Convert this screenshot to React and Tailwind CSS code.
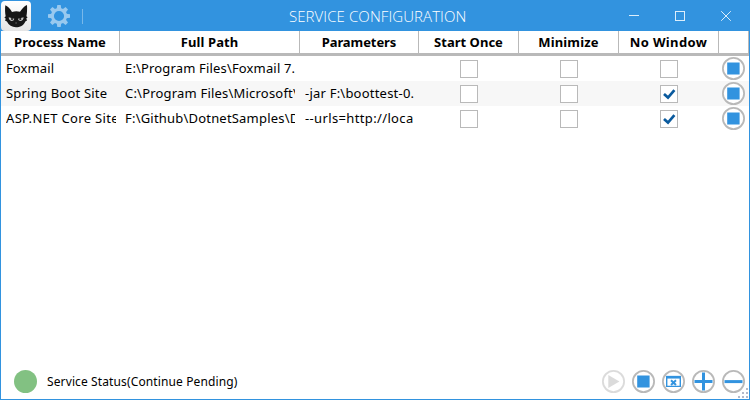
import React from 'react';

const FONT = "font-['Noto_Sans','Open_Sans',sans-serif]";

const columns = [
  { label: 'Process Name', width: 'w-[119px]', tracking: 'tracking-[0.03px]' },
  { label: 'Full Path', width: 'w-[180px]', tracking: 'tracking-[0.12px]' },
  { label: 'Parameters', width: 'w-[119px]', tracking: 'tracking-[-0.08px]' },
  { label: 'Start Once', width: 'w-[100px]', tracking: 'tracking-[0.02px]' },
  { label: 'Minimize', width: 'w-[100px]', tracking: 'tracking-[0.15px]' },
  { label: 'No Window', width: 'w-[100px]', tracking: 'tracking-[0.35px]' },
  { label: '', width: 'w-[30px]', tracking: '' },
];

const rows = [
  {
    name: 'Foxmail', nameTracking: 'tracking-[0.12px]',
    path: 'E:\\Program Files\\Foxmail 7.', pathTracking: 'tracking-[0.16px]',
    params: '', paramsTracking: '',
    checks: [false, false, false],
  },
  {
    name: 'Spring Boot Site', nameTracking: 'tracking-[0.2px]',
    path: 'C:\\Program Files\\Microsoft\\', pathTracking: 'tracking-[0.2px]',
    params: '-jar F:\\boottest-0.', paramsTracking: 'tracking-[0.22px]',
    checks: [false, false, true],
  },
  {
    name: 'ASP.NET Core Site', nameTracking: 'tracking-[0.33px]',
    path: 'F:\\Github\\DotnetSamples\\D', pathTracking: 'tracking-[0.2px]',
    params: '--urls=http://loca', paramsTracking: 'tracking-[0.36px]',
    checks: [false, false, true],
  },
];

function CatLogo() {
  return (
    <svg className="block h-[30px] w-[30px]" viewBox="0 0 30 30">
      <defs>
        <linearGradient id="tile" x1="0" y1="0" x2="0" y2="1">
          <stop offset="0" stopColor="#ffffff" />
          <stop offset="1" stopColor="#e4e4e4" />
        </linearGradient>
      </defs>
      <rect x="0" y="0" width="30" height="30" rx="4" fill="url(#tile)" />
      <path d="M4.3 4.2C6.6 5 9.4 8 11 11Q15 9.8 19 10.8C20.8 7.8 23.4 5 26 3.9C26.3 8 26 12.5 25.4 15.2L26.6 16.2L25.3 17.6L26 19.4L24.3 20.4C22.5 24.5 19 26.3 15 26.3S7.7 24.5 5.9 20.6L4 19.6L4.8 17.8L3.4 16.6L4.7 15.2C4 12 3.9 8 4.3 4.2Z" fill="#161616" />
      <path d="M7.7 16.2L13.3 17.7C13 19.3 11.9 20 10.5 19.9C8.8 19.7 7.8 18.3 7.7 16.2Z" fill="#c2c2c2" />
      <path d="M22.6 16.2L17 17.7C17.3 19.3 18.4 20 19.8 19.9C21.5 19.7 22.5 18.3 22.6 16.2Z" fill="#c2c2c2" />
      <circle cx="11" cy="18" r="1.1" fill="#202020" />
      <circle cx="19.3" cy="18" r="1.1" fill="#202020" />
      <path d="M14.2 22h1.8" stroke="#6c6c6c" strokeWidth=".8" />
    </svg>
  );
}

function Gear() {
  return (
    <svg className="block h-[22px] w-[22px]" viewBox="-11 -11 22 22" fill="#99c9ef">
      {[0, 45, 90, 135, 180, 225, 270, 315].map((a) => (
        <path key={a} d="M-2.3 -7L-1.7 -11H1.7L2.3 -7Z" transform={`rotate(${a})`} />
      ))}
      <circle r="6.6" fill="none" stroke="#99c9ef" strokeWidth="3" />
    </svg>
  );
}

function Checkbox({ checked }) {
  return (
    <span className="mt-px block h-[18px] w-[18px] border border-[#b9b9b9] bg-white">
      {checked && (
        <svg className="block h-4 w-4" viewBox="0 0 16 16">
          <path d="M3 8L7 11.6L13.4 4.2" fill="none" stroke="#0a5a9e" strokeWidth="2.7" />
        </svg>
      )}
    </span>
  );
}

function RoundIcon({ kind }) {
  return (
    <svg className={`block h-[23px] w-[23px] shrink-0 ${kind === 'play' ? 'opacity-50' : ''}`} viewBox="0 0 23 23">
      <circle cx="11.5" cy="11.5" r="10.6" fill="#fff" stroke="#b9b9b9" strokeWidth="1.8" />
      {kind === 'stop' && <rect x="5.2" y="5.5" width="12.4" height="12" fill="#3293df" />}
      {kind === 'play' && <path d="M6.3 4.9L17.4 11.5L6.3 18.1Z" fill="#b9b9b9" />}
      {kind === 'plus' && <path d="M2.5 11.6H20.5M11.5 2.6V20.5" stroke="#3293df" strokeWidth="3" />}
      {kind === 'minus' && <path d="M2.5 11.6H20.5" stroke="#3293df" strokeWidth="3" />}
      {kind === 'window' && (
        <g stroke="#3293df" fill="none">
          <path d="M4.7 7.1V16.4H18.3V7.1" strokeWidth="1.4" />
          <path d="M4 7.2H19" strokeWidth="2.7" />
          <path d="M9 10.3L14 14.9M14 10.3L9 14.9" strokeWidth="2" />
        </g>
      )}
    </svg>
  );
}

function TitleBar() {
  return (
    <div className="flex h-[31px] bg-[#3293df]">
      <div className="flex w-[289px] shrink-0 pl-px pt-px">
        <CatLogo />
        <div className="ml-[17px] mt-1"><Gear /></div>
        <div className="ml-3 mt-[8px] h-[15px] w-px bg-[#78b8ea]" />
      </div>
      <div className="w-[181px] shrink-0 whitespace-nowrap font-['Open_Sans','Noto_Sans',sans-serif] text-[15px] font-light leading-[33px] tracking-[0.08px] text-white">
        SERVICE CONFIGURATION
      </div>
      <svg className="ml-[150px] block h-[31px] w-[130px] shrink-0" viewBox="620 0 130 31" fill="none" stroke="#dceefb" shapeRendering="crispEdges">
        <path d="M629 15.5H639M675.5 11.5H684.5V20.5H675.5Z" />
        <path d="M721.2 11.2L730.8 20.8M730.8 11.2L721.2 20.8" shapeRendering="auto" />
      </svg>
    </div>
  );
}

function Cell({ width, text, tracking }) {
  return (
    <div className={`${width} shrink-0 pl-[5px]`}>
      <div className={`overflow-hidden whitespace-nowrap leading-[25px] ${tracking}`}>{text}</div>
    </div>
  );
}

function Grip() {
  return (
    <svg className="absolute bottom-0 right-0 h-[11px] w-[11px]" viewBox="0 0 11 11" fill="#b3b9ca" shapeRendering="crispEdges">
      {[[8, 0], [4, 4], [8, 4], [0, 8], [4, 8], [8, 8]].map(([x, y]) => (
        <rect key={`${x}-${y}`} x={x} y={y} width="2" height="2" />
      ))}
    </svg>
  );
}

export default function App() {
  return (
    <div className={`flex h-[400px] w-[750px] flex-col overflow-hidden bg-white text-black ${FONT}`}>
      <TitleBar />
      <div className="relative flex flex-1 flex-col border-x border-b border-[#3293df]">
        <div className="flex h-[25px] border-b-[3px] border-b-[#b9b9b9]">
          {columns.map((c, i) => (
            <div key={i} className={`${c.width} ${c.tracking} shrink-0 whitespace-nowrap border-r border-[#b9b9b9] text-center text-[13px] font-bold leading-[23px]`}>
              {c.label}
            </div>
          ))}
        </div>
        {rows.map((r, i) => (
          <div key={r.name} className={`flex h-[25px] items-center text-[13px] ${i === 1 ? 'bg-[#f7f7f7]' : 'bg-white'}`}>
            <Cell width="w-[119px] pr-1" text={r.name} tracking={r.nameTracking} />
            <Cell width="w-[180px] pr-[5px]" text={r.path} tracking={r.pathTracking} />
            <Cell width="w-[119px] pr-1" text={r.params} tracking={r.paramsTracking} />
            {r.checks.map((c, j) => (
              <div key={j} className="flex w-[100px] shrink-0 justify-center"><Checkbox checked={c} /></div>
            ))}
            <div className="flex w-[30px] shrink-0 justify-center pr-px"><RoundIcon kind="stop" /></div>
          </div>
        ))}
        <div className="mt-auto flex h-[35px] items-center pb-px pl-[13px] pr-1">
          <div className="h-[23px] w-[23px] rounded-full bg-[#82c182]" />
          <div className="ml-[10px] whitespace-nowrap pt-0.5 text-[12px] tracking-[0.12px]">Service Status(Continue Pending)</div>
          <div className="ml-auto flex gap-[7px]">
            <RoundIcon kind="play" />
            <RoundIcon kind="stop" />
            <RoundIcon kind="window" />
            <RoundIcon kind="plus" />
            <RoundIcon kind="minus" />
          </div>
        </div>
        <Grip />
      </div>
    </div>
  );
}
